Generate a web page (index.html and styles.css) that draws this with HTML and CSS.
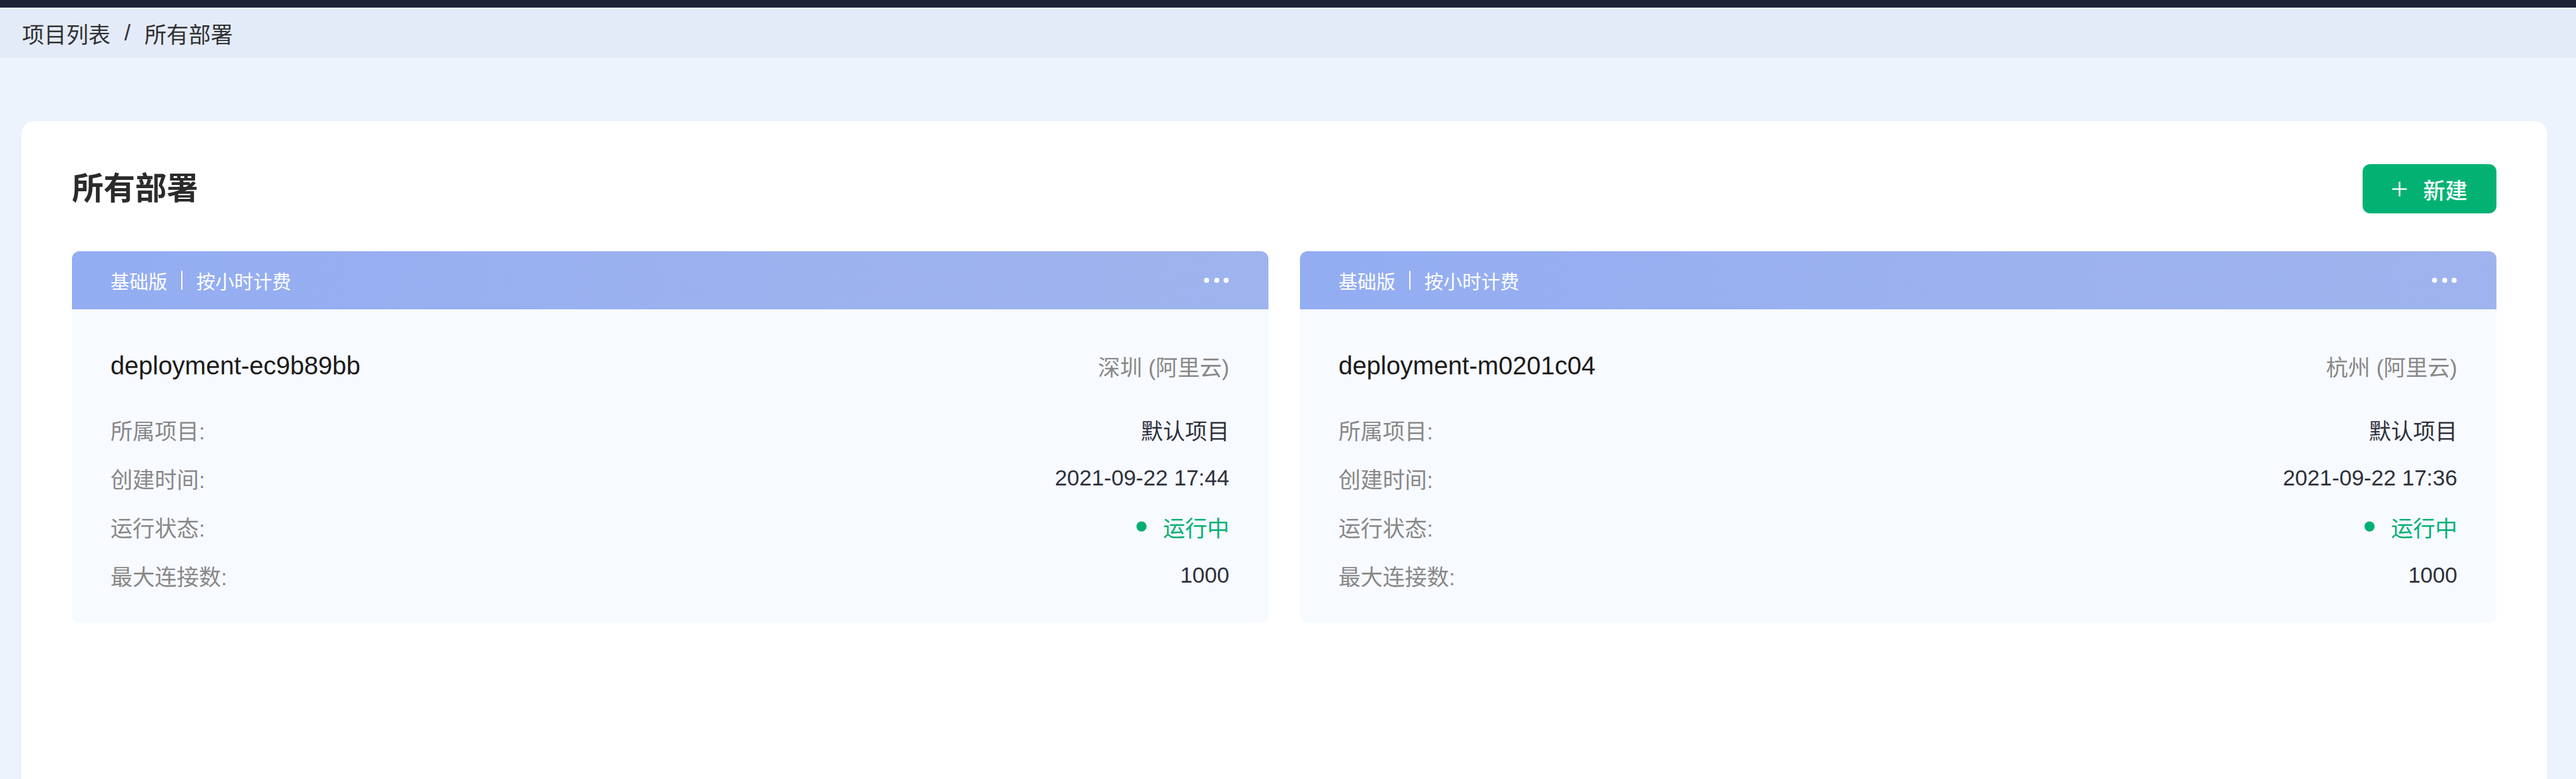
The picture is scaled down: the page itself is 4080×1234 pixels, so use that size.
FILE: index.html
```html
<!DOCTYPE html>
<html lang="zh-CN">
<head>
<meta charset="utf-8">
<title>所有部署</title>
<link rel="stylesheet" href="styles.css">
</head>
<body>
<div class="topbar"></div>
<div class="breadcrumb">
  <span class="crumb">项目列表</span>
  <span class="crumb-sep">/</span>
  <span class="crumb current">所有部署</span>
</div>
<div class="main">
  <div class="main-head">
    <h1 class="page-title">所有部署</h1>
    <button class="btn-new">
      <svg class="plus" width="25" height="25" viewBox="0 0 25 25"><path d="M12.5 1 V24 M1 12.5 H24" stroke="#fff" stroke-width="2.6" fill="none"/></svg>
      <span>新建</span>
    </button>
  </div>
  <div class="grid">
    <div class="dcard">
      <div class="dcard-head">
        <div class="tags"><span>基础版</span><i class="vsep"></i><span>按小时计费</span></div>
        <div class="more"><i></i><i></i><i></i></div>
      </div>
      <div class="dcard-body">
        <div class="title-row">
          <span class="dname">deployment-ec9b89bb</span>
          <span class="region">深圳 (阿里云)</span>
        </div>
        <div class="rows">
          <div class="row"><span class="label">所属项目:</span><span class="value">默认项目</span></div>
          <div class="row"><span class="label">创建时间:</span><span class="value">2021-09-22 17:44</span></div>
          <div class="row"><span class="label">运行状态:</span><span class="value status"><i class="dot"></i>运行中</span></div>
          <div class="row"><span class="label">最大连接数:</span><span class="value">1000</span></div>
        </div>
      </div>
    </div>
    <div class="dcard">
      <div class="dcard-head">
        <div class="tags"><span>基础版</span><i class="vsep"></i><span>按小时计费</span></div>
        <div class="more"><i></i><i></i><i></i></div>
      </div>
      <div class="dcard-body">
        <div class="title-row">
          <span class="dname">deployment-m0201c04</span>
          <span class="region">杭州 (阿里云)</span>
        </div>
        <div class="rows">
          <div class="row"><span class="label">所属项目:</span><span class="value">默认项目</span></div>
          <div class="row"><span class="label">创建时间:</span><span class="value">2021-09-22 17:36</span></div>
          <div class="row"><span class="label">运行状态:</span><span class="value status"><i class="dot"></i>运行中</span></div>
          <div class="row"><span class="label">最大连接数:</span><span class="value">1000</span></div>
        </div>
      </div>
    </div>
  </div>
</div>
</body>
</html>
```
FILE: styles.css
```css
* { box-sizing: border-box; }
html, body { margin: 0; padding: 0; }
body {
  background: #edf3fc;
  font-family: "Liberation Sans", "Noto Sans CJK SC", sans-serif;
  color: #303133;
  overflow: hidden;
}
.topbar { height: 12px; background: #1e2234; }
.breadcrumb {
  height: 80px;
  background: #e4ebf8;
  display: flex;
  align-items: center;
  padding-left: 35px;
  font-size: 35px;
  color: #303133;
}
.crumb-sep { margin: 0 22px; color: #303133; }
.main {
  margin: 100px 46px 0 34px;
  background: #fff;
  border-radius: 20px 20px 0 0;
  padding: 68px 80px 80px;
  min-height: calc(100vh - 192px);
}
.main-head {
  display: flex;
  justify-content: space-between;
  align-items: center;
  height: 78px;
}
.page-title {
  margin: 0;
  font-size: 50px;
  font-weight: 700;
  color: #2b2b2b;
  line-height: 78px;
}
.btn-new {
  width: 212px;
  height: 78px;
  border: none;
  border-radius: 12px;
  background: #03b273;
  color: #fff;
  display: flex;
  align-items: center;
  justify-content: center;
  gap: 25px;
  font-family: inherit;
  font-size: 35px;
  font-weight: 500;
  padding: 0;
}
.plus { display: block; }
.grid {
  margin-top: 60px;
  display: grid;
  grid-template-columns: 1fr 1fr;
  gap: 50px;
}
.dcard { border-radius: 12px; overflow: hidden; }
.dcard-head {
  height: 92px;
  background: linear-gradient(100deg, #93adf2 0%, #9cb2ef 60%, #9fb4ee 100%);
  display: flex;
  align-items: center;
  justify-content: space-between;
  padding: 0 63px 0 61px;
  color: #fff;
  font-size: 30px;
}
.tags { display: flex; align-items: center; }
.vsep {
  display: block;
  width: 2px;
  height: 30px;
  background: #fff;
  margin: 0 22px;
}
.more { display: flex; gap: 7.5px; }
.more i {
  display: block;
  width: 8px;
  height: 8px;
  border-radius: 50%;
  background: #fff;
}
.dcard-body {
  background: #f7faff;
  padding: 59px 62px 50px 61px;
}
.title-row {
  height: 60px;
  display: flex;
  align-items: center;
  justify-content: space-between;
}
.dname { font-size: 40px; color: #1b1b1b; }
.region { font-size: 35px; color: #888; }
.rows { margin-top: 45px; }
.row {
  height: 52px;
  display: flex;
  align-items: center;
  justify-content: space-between;
  font-size: 35px;
}
.row + .row { margin-top: 25px; }
.label { color: #888; }
.value { color: #2e313c; }
.status { color: #00b073; display: flex; align-items: center; }
.dot {
  display: block;
  width: 16px;
  height: 16px;
  border-radius: 50%;
  background: #00b073;
  margin-right: 26px;
}
```
